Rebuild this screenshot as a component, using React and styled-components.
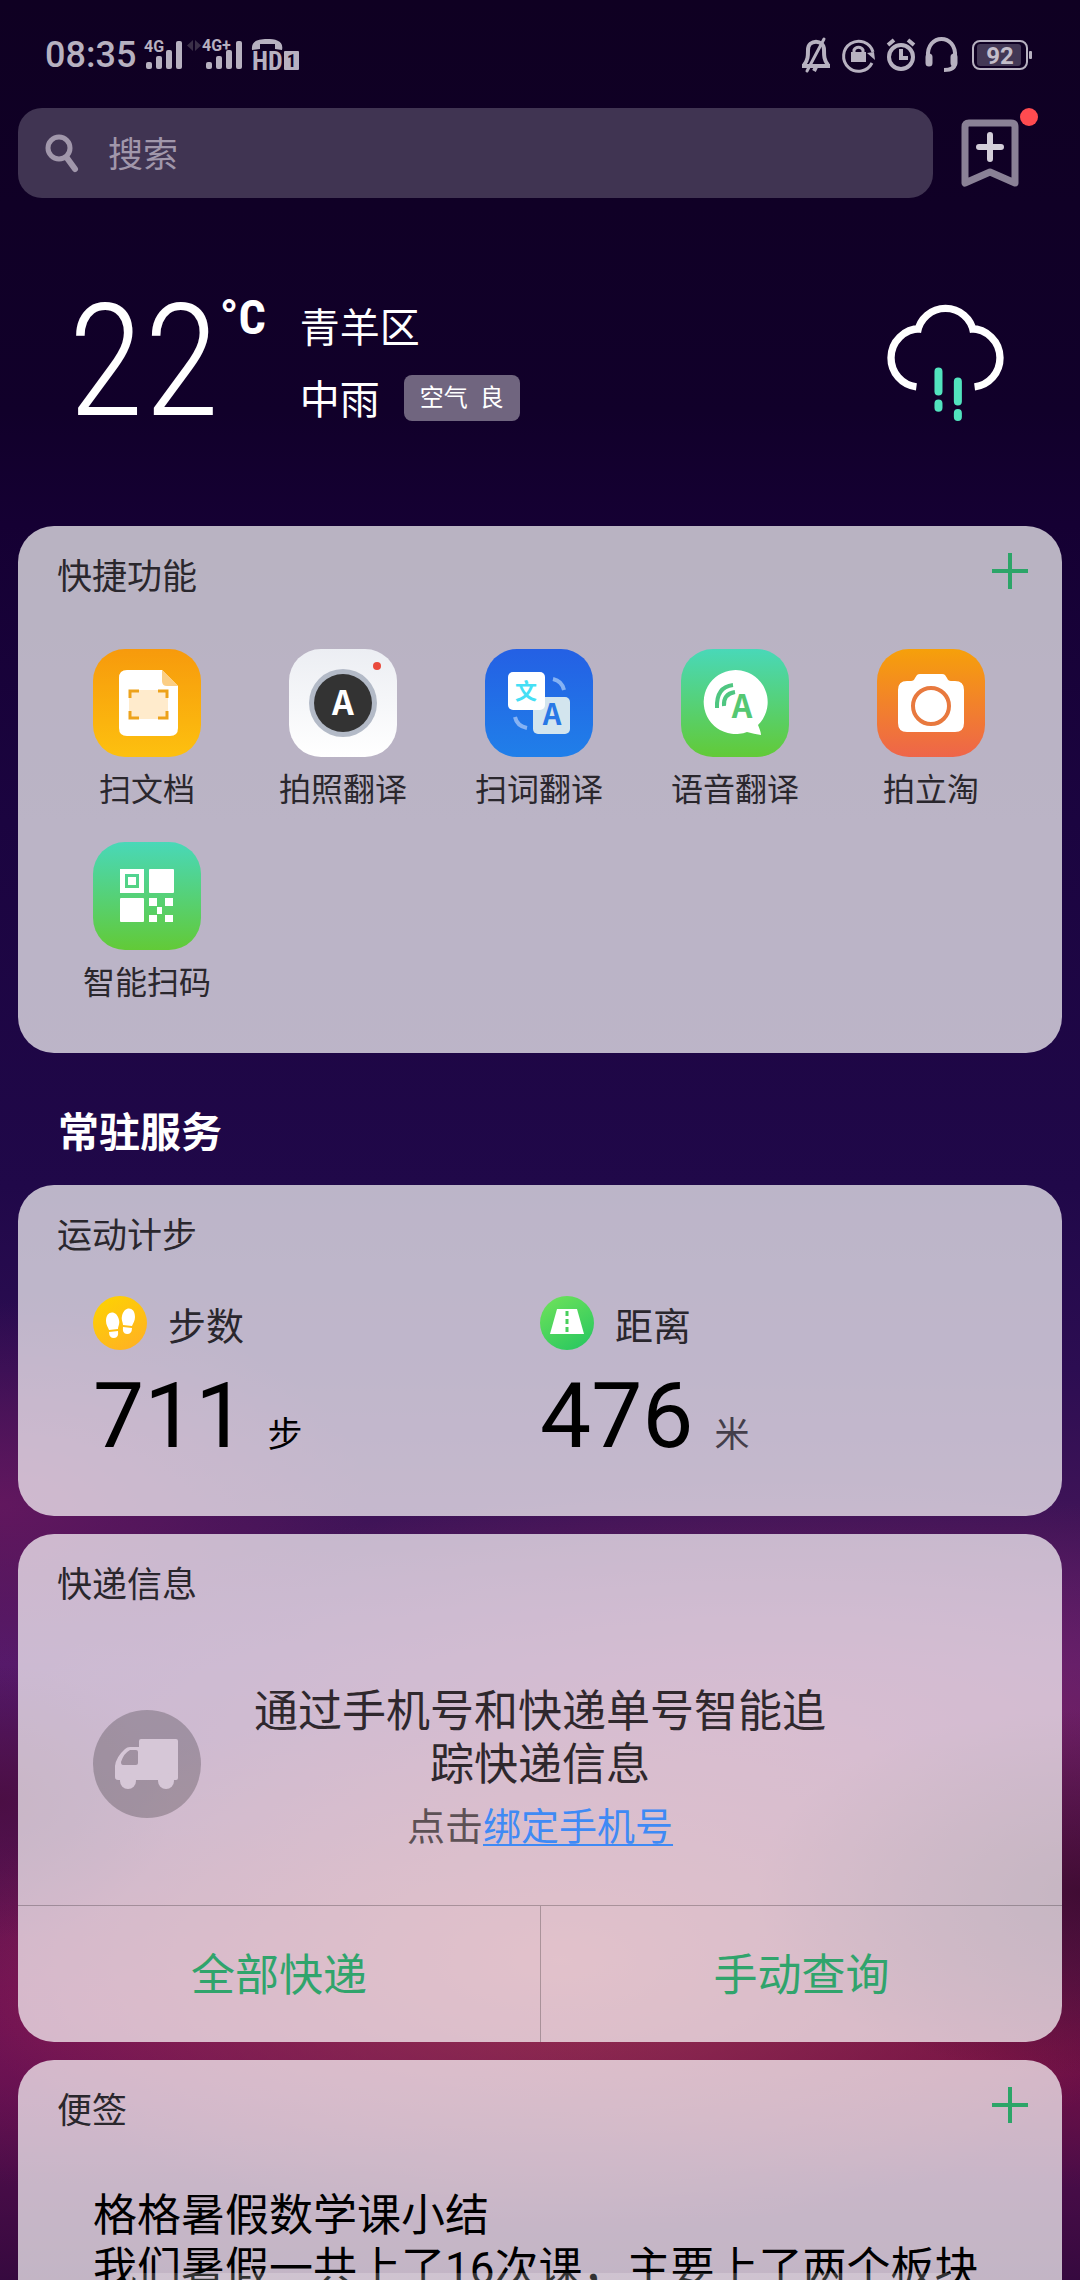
import React from "react";
import styled, { createGlobalStyle } from "styled-components";

const services = [
  { name: "扫文档", from: "#f79a0c", to: "#fdc00f", icon: <DocIcon /> },
  { name: "拍照翻译", from: "#eceef3", to: "#ffffff", icon: <PhotoIcon /> },
  { name: "扫词翻译", from: "#2460e4", to: "#207fe9", icon: <WordIcon /> },
  { name: "语音翻译", from: "#49d8b8", to: "#62ca37", icon: <VoiceIcon /> },
  { name: "拍立淘", from: "#f6a00a", to: "#ee654a", icon: <CameraIcon /> },
  { name: "智能扫码", from: "#49d8b8", to: "#62ca37", icon: <QrIcon /> },
];

export default function App() {
  return (
    <>
      <GlobalStyle />
      <Screen>
        <StatusBar>
          <StatusGroup>
            <Clock>08:35</Clock>
            <SignalIcons />
          </StatusGroup>
          <StatusGroup>
            <DeviceIcons />
          </StatusGroup>
        </StatusBar>

        <TopRow>
          <SearchBox>
            <SearchIcon />
            <SearchInput type="text" placeholder="搜索" aria-label="搜索" />
          </SearchBox>
          <BookmarkButton aria-label="收藏">
            <BookmarkIcon />
            <RedDot />
          </BookmarkButton>
        </TopRow>

        <Weather>
          <Temperature>22</Temperature>
          <Unit>°C</Unit>
          <WeatherInfo>
            <span>青羊区</span>
            <WeatherLine>
              <span>中雨</span>
              <AirBadge>空气&nbsp;&nbsp;良</AirBadge>
            </WeatherLine>
          </WeatherInfo>
          <RainIcon />
        </Weather>

        <Card>
          <CardHeader>
            <CardTitle>快捷功能</CardTitle>
            <AddButton aria-label="添加快捷功能">
              <PlusIcon />
            </AddButton>
          </CardHeader>
          <ServiceGrid>
            {services.map((s) => (
              <Service key={s.name}>
                <Tile $from={s.from} $to={s.to}>
                  {s.icon}
                </Tile>
                {s.name}
              </Service>
            ))}
          </ServiceGrid>
        </Card>

        <SectionTitle>常驻服务</SectionTitle>

        <Card>
          <CardHeader>
            <CardTitle>运动计步</CardTitle>
          </CardHeader>
          <Stats>
            <Stat>
              <StatLabel>
                <StepsIcon />
                步数
              </StatLabel>
              <StatValue>
                <Number>711</Number>
                <StatUnit $color="#000">步</StatUnit>
              </StatValue>
            </Stat>
            <Stat>
              <StatLabel>
                <RoadIcon />
                距离
              </StatLabel>
              <StatValue>
                <Number>476</Number>
                <StatUnit $color="#443e4a">米</StatUnit>
              </StatValue>
            </Stat>
          </Stats>
        </Card>

        <Card>
          <CardHeader>
            <CardTitle>快递信息</CardTitle>
          </CardHeader>
          <Delivery>
            <TruckIcon />
            <DeliveryText>
              <DeliveryLead>通过手机号和快递单号智能追踪快递信息</DeliveryLead>
              <DeliveryHint>
                点击<a href="#bind">绑定手机号</a>
              </DeliveryHint>
            </DeliveryText>
          </Delivery>
          <Actions>
            <ActionButton>全部快递</ActionButton>
            <ActionButton>手动查询</ActionButton>
          </Actions>
        </Card>

        <Card>
          <CardHeader>
            <CardTitle>便签</CardTitle>
            <AddButton aria-label="添加便签">
              <PlusIcon />
            </AddButton>
          </CardHeader>
          <Note>
            <p>格格暑假数学课小结</p>
            <p>我们暑假一共上了16次课，主要上了两个板块</p>
          </Note>
        </Card>
        <HomeBar />
      </Screen>
    </>
  );
}

function SignalBars({ x }) {
  return (
    <g>
      <rect x={x} y="24" width="6" height="7" rx="2" />
      <rect x={x + 10} y="18" width="6" height="13" rx="2" />
      <rect x={x + 20} y="12" width="6" height="19" rx="2" />
      <rect x={x + 30} y="3" width="6" height="28" rx="2" />
    </g>
  );
}

function SignalIcons() {
  return (
    <svg width="158" height="34" viewBox="0 0 158 34" fill="#b7b1c0">
      <SignalBars x={3} />
      <SignalBars x={63} />
      <SmallText x="1" y="14" fontSize="16">4G</SmallText>
      <SmallText x="59" y="13" fontSize="16">4G+</SmallText>
      <path d="M50 2v11l-6-5.500zM52 2v11l6-5.500z" fill="#3b3048" />
      <path d="M109 12C108 3 115 1 124 1s17 2 15 11l-7-1V6h-15v5z" />
      <NarrowText x="109" y="32" fontSize="26">HD</NarrowText>
      <rect x="141" y="13" width="15" height="19" rx="1" />
      <NarrowText x="144" y="29" fontSize="18" fill="#0f0022">1</NarrowText>
    </svg>
  );
}

function DeviceIcons() {
  return (
    <svg width="232" height="36" viewBox="0 0 232 36" fill="none" stroke="#b7b1c0" strokeWidth="4">
      <path d="M2 29h28M4 28c4-5 4-9 4-15 0-11 16-11 16 0 0 6 0 10 4 15M14 34l2-4" />
      <path d="M7 34L24 2" strokeWidth="3" strokeLinecap="round" />
      <path d="M72 26a15 15 0 1 1 1-11" strokeWidth="3" />
      <path d="M67 16l7-1 1 8z" fill="#b7b1c0" stroke="none" />
      <path d="M54 16v-3a5 5 0 0 1 9 0v3" strokeWidth="3" />
      <path d="M51 15h15v10H51z" fill="#b7b1c0" stroke="none" />
      <circle cx="101" cy="20" r="12" />
      <path d="M101 12v9h7M88 8l6-5M114 8l-6-5" strokeWidth="4" />
      <path d="M128 20c-2-24 29-24 27 0v6q0 7-11 7" />
      <path d="M129 20v6M154 20v6" strokeWidth="7" strokeLinecap="round" />
      <rect x="173" y="4" width="54" height="28" rx="7" strokeWidth="2" />
      <rect x="177" y="7" width="44" height="22" rx="3" fill="#433855" stroke="none" />
      <rect x="229" y="14" width="3" height="8" rx="1" fill="#b7b1c0" stroke="none" />
      <SmallText x="200" y="27" fontSize="24" textAnchor="middle" fill="#c3bdca" stroke="none">
        92
      </SmallText>
    </svg>
  );
}

function SearchIcon() {
  return (
    <svg width="32" height="38" viewBox="0 0 32 38" fill="none" stroke="#a197ab">
      <circle cx="13" cy="14" r="11" strokeWidth="5" />
      <path d="M21 24l8 11" strokeWidth="6" strokeLinecap="round" />
    </svg>
  );
}

function BookmarkIcon() {
  return (
    <svg width="58" height="68" viewBox="0 0 58 68" fill="none" strokeLinejoin="round">
      <path d="M4 8q0-4 4-4h42q4 0 4 4v56L29 53 4 64z" stroke="#8a8196" strokeWidth="7" />
      <path d="M29 16v24M18 28h22" stroke="#d3ced9" strokeWidth="6" strokeLinecap="round" />
    </svg>
  );
}

function RainIcon() {
  return (
    <svg width="117" height="119" viewBox="140 98 350 356" fill="none" strokeWidth="22">
      <path
        d="M228 349A87 87 0 0 1 152 262A87 87 0 0 1 241 175M231 186A85 85 0 0 1 399 186M389 175A87 87 0 0 1 478 262A87 87 0 0 1 402 349"
        stroke="#fff"
      />
      <path
        d="M294 303v60M294 399v12M352 333v60M352 427v12"
        stroke="#52e3be"
        strokeWidth="24"
        strokeLinecap="round"
      />
    </svg>
  );
}

function PlusIcon() {
  return (
    <svg width="36" height="36" viewBox="0 0 36 36" stroke="#2ca568" strokeWidth="4">
      <path d="M18 0v36M0 18h36" />
    </svg>
  );
}

function DocIcon() {
  return (
    <svg width="108" height="108" viewBox="0 0 108 108">
      <path d="M34 21h35l16 16v42q0 8-8 8H34q-8 0-8-8V29q0-8 8-8z" fill="#fff" />
      <path d="M69 21l16 16H74q-5 0-5-5z" fill="#fbce85" />
      <rect x="36" y="41" width="39" height="29" fill="#ffebcc" />
      <path
        d="M37 49v-7h9M65 42h9v7M74 62v7h-9M46 69h-9v-7"
        fill="none"
        stroke="#eda21a"
        strokeWidth="3"
      />
    </svg>
  );
}

function PhotoIcon() {
  return (
    <svg width="108" height="108" viewBox="0 0 108 108">
      <circle cx="54" cy="54" r="34" fill="#b3bac7" />
      <circle cx="54" cy="54" r="29" fill="#333" />
      <circle cx="88" cy="17" r="4" fill="#ea4a3c" />
      <Letter x="54" y="66" fontSize="34" fill="#fff">A</Letter>
    </svg>
  );
}

function WordIcon() {
  return (
    <svg width="108" height="108" viewBox="0 0 108 108">
      <rect x="48" y="48" width="37" height="37" rx="5" fill="#d3e5ee" />
      <Letter x="67" y="76" fontSize="29" fill="#2878e6">A</Letter>
      <rect x="23" y="23" width="37" height="38" rx="5" fill="#fff" />
      <Letter x="41" y="50" fontSize="22" fill="#45dff5">文</Letter>
      <path d="M30 68q2 9 12 11M68 30q9 2 11 11" fill="none" stroke="#86b2f3" strokeWidth="4" />
    </svg>
  );
}

function VoiceIcon() {
  return (
    <svg width="108" height="108" viewBox="0 0 108 108">
      <path d="M77 76A32 32 0 1 0 66 83Q73 85 80 86Q80 83 77 76z" fill="#fff" />
      <path
        d="M36 59Q35 38 52 36M43 57Q42 45 54 43"
        fill="none"
        stroke="#4fc681"
        strokeWidth="4"
      />
      <Letter x="61" y="69" fontSize="32" fill="#55c872">A</Letter>
    </svg>
  );
}

function CameraIcon() {
  return (
    <svg width="108" height="108" viewBox="0 0 108 108">
      <path
        d="M30 32h4q3 0 4-3l2-3q1-1 3-1h22q2 0 3 1l2 3q1 3 4 3h4q9 0 9 9v33q0 9-9 9H30q-9 0-9-9V41q0-9 9-9z"
        fill="#fff"
      />
      <circle cx="54" cy="57" r="18" fill="none" stroke="#e8793e" strokeWidth="4" />
    </svg>
  );
}

function QrIcon() {
  return (
    <svg width="108" height="108" viewBox="0 0 108 108" fill="#fff">
      <path d="M27 27h24v24H27zM32 32v14h14V32z" fillRule="evenodd" />
      <rect x="35" y="35" width="8" height="8" />
      <rect x="56" y="27" width="25" height="24" rx="1" />
      <rect x="27" y="56" width="24" height="24" rx="1" />
      <path d="M56 56h8v8h-8zM72 56h8v8h-8zM64 65h5v7h-5zM56 73h8v7h-8zM72 73h8v7h-8z" />
    </svg>
  );
}

function StepsIcon() {
  return (
    <svg width="54" height="54" viewBox="0 0 54 54">
      <linearGradient id="steps" x2="0.6" y2="1">
        <stop stopColor="#fdd400" />
        <stop offset="1" stopColor="#ffb420" />
      </linearGradient>
      <circle cx="27" cy="27" r="27" fill="url(#steps)" />
      <g fill="#fff">
        <path d="M13 25c0-11 11-11 13-1 1 4-1 6-1 9l-9 1c-1-3-3-5-3-9z" />
        <path d="M16 36l9-1q1 7-4 7t-5-6z" />
        <path d="M42 21c0-11-11-11-13-1-1 4 1 6 1 9l9 1c1-3 3-5 3-9z" />
        <path d="M39 32l-9-1q-1 7 4 7t5-6z" />
      </g>
    </svg>
  );
}

function RoadIcon() {
  return (
    <svg width="54" height="54" viewBox="0 0 54 54">
      <linearGradient id="road" x2="0.6" y2="1">
        <stop stopColor="#72e35a" />
        <stop offset="1" stopColor="#2fca5f" />
      </linearGradient>
      <circle cx="27" cy="27" r="27" fill="url(#road)" />
      <path d="M17 13h20l7 25H10z" fill="#fff" />
      <path d="M27 15v5M27 23v5M27 31v5" stroke="#48cf5c" strokeWidth="3" />
    </svg>
  );
}

function TruckIcon() {
  return (
    <svg width="108" height="108" viewBox="0 0 108 108">
      <circle cx="54" cy="54" r="54" fill="#000" fillOpacity="0.22" />
      <g fill="#d6c7d7">
        <path
          d="M48 29h35q2 0 2 2v37q0 2-2 2H25q-3 0-3-3V56q1-9 10-17 2-2 5-2h9v-6q0-2 2-2zM45 42q0-2-2-2h-6q-6 3-9 12 0 3 2 3h13q2 0 2-2z"
          fillRule="evenodd"
        />
        <circle cx="35" cy="71" r="8" />
        <circle cx="73" cy="71" r="8" />
      </g>
    </svg>
  );
}

const GlobalStyle = createGlobalStyle`
  * {
    box-sizing: border-box;
  }
  body {
    margin: 0;
    background: #0f0022;
    font-family: Roboto, "Noto Sans CJK SC", sans-serif;
  }
  svg {
    display: block;
    flex: none;
    overflow: visible;
  }
  button {
    border: 0;
    padding: 0;
    background: none;
    font: inherit;
    color: inherit;
    cursor: pointer;
  }
  h2, p {
    margin: 0;
    font-weight: 400;
  }
`;
const Screen = styled.main`
  height: 100vh;
  overflow-y: auto;
  scrollbar-width: none;
  padding: 0 18px;
  display: flex;
  flex-direction: column;
  background:
    radial-gradient(30% 8% at 100% 83%, rgba(60, 10, 48, 0.9), transparent),
    radial-gradient(16% 6% at 0% 79%, rgba(72, 12, 62, 0.8), transparent),
    radial-gradient(56% 12% at 52% 86%, rgba(168, 55, 80, 0.85), transparent),
    radial-gradient(50% 8% at 10% 88%, rgba(130, 20, 85, 0.75), transparent),
    radial-gradient(50% 6% at 92% 90%, rgba(122, 14, 62, 0.7), transparent),
    radial-gradient(34% 9% at 0% 66%, rgba(106, 24, 96, 0.8), transparent),
    radial-gradient(70% 11% at 72% 76%, rgba(140, 40, 100, 0.7), transparent),
    linear-gradient(
      #0f0022 0%,
      #11002a 18%,
      #150033 23%,
      #1b0440 36%,
      #200849 52%,
      #2c0d52 60%,
      #401458 67%,
      #521a6c 73%,
      #5a1350 85%,
      #5a1050 91%,
      #36093f 100%
    );
`;
const StatusBar = styled.header`
  display: flex;
  flex: none;
  align-items: center;
  justify-content: space-between;
  height: 108px;
  padding: 2px 30px 0 27px;
`;
const StatusGroup = styled.div`
  display: flex;
  align-items: center;
  gap: 7px;
`;
const Clock = styled.time`
  font-size: 36px;
  font-weight: 500;
  color: #b7b1c0;
`;
const SmallText = styled.text`
  font-family: Roboto, sans-serif;
  font-weight: 700;
`;
const NarrowText = styled.text`
  font-family: "Roboto Condensed", Roboto, sans-serif;
  font-weight: 700;
`;
const Letter = styled.text`
  font-family: "Noto Sans CJK SC", sans-serif;
  font-weight: 700;
  text-anchor: middle;
`;
const TopRow = styled.div`
  display: flex;
  flex: none;
  align-items: center;
  gap: 28px;
  padding-right: 43px;
`;
const SearchBox = styled.label`
  display: flex;
  flex: 1;
  align-items: center;
  gap: 30px;
  height: 90px;
  padding: 0 28px;
  border-radius: 24px;
  background: #403452;
`;
const SearchInput = styled.input`
  flex: 1;
  min-width: 0;
  border: 0;
  outline: 0;
  padding: 4px 0 0;
  background: none;
  color: #fff;
  font: inherit;
  font-size: 35px;
  &::placeholder {
    color: #a197ab;
    opacity: 1;
  }
`;
const BookmarkButton = styled.button`
  position: relative;
`;
const RedDot = styled.span`
  position: absolute;
  top: -11px;
  right: -19px;
  width: 18px;
  height: 18px;
  border-radius: 50%;
  background: #ff4b50;
`;
const Weather = styled.section`
  display: flex;
  flex: none;
  align-items: center;
  height: 328px;
  padding: 0 58px 0 50px;
  color: #fff;
  > svg {
    margin-left: auto;
  }
`;
const Temperature = styled.div`
  font-family: "Roboto Condensed", Roboto, sans-serif;
  font-size: 156px;
  font-weight: 300;
  line-height: 160px;
`;
const Unit = styled.div`
  align-self: flex-start;
  margin-top: 92px;
  font-family: "Roboto Condensed", Roboto, sans-serif;
  font-size: 48px;
  font-weight: 700;
  line-height: 56px;
`;
const WeatherInfo = styled.div`
  display: flex;
  flex-direction: column;
  gap: 12px;
  margin-left: 34px;
  padding-top: 6px;
  font-size: 40px;
  line-height: 60px;
`;
const WeatherLine = styled.div`
  display: flex;
  align-items: center;
  gap: 24px;
`;
const AirBadge = styled.span`
  margin-bottom: 6px;
  padding: 0 16px;
  border-radius: 8px;
  background: #70657f;
  font-size: 24px;
  line-height: 46px;
`;
const Card = styled.section`
  flex: none;
  margin-bottom: 18px;
  border-radius: 36px;
  background: rgba(255, 255, 255, 0.7);
  overflow: hidden;
`;
const CardHeader = styled.div`
  display: flex;
  align-items: center;
  justify-content: space-between;
  height: 98px;
  padding: 0 34px 4px 39px;
`;
const CardTitle = styled.h2`
  font-size: 35px;
  color: #2a272d;
`;
const AddButton = styled.button`
  margin-bottom: 4px;
`;
const ServiceGrid = styled.div`
  display: grid;
  grid-template-columns: repeat(5, 1fr);
  row-gap: 28px;
  padding: 25px 33px 46px 31px;
`;
const Service = styled.button`
  display: flex;
  flex-direction: column;
  align-items: center;
  gap: 9px;
  font-size: 32px;
  line-height: 48px;
  color: #2a272d;
`;
const Tile = styled.span`
  border-radius: 32px;
  overflow: hidden;
  background: linear-gradient(${(props) => props.$from}, ${(props) => props.$to});
`;
const SectionTitle = styled.h2`
  flex: none;
  margin: 32px 40px 22px;
  color: #fff;
  font-size: 41px;
  font-weight: 700;
  line-height: 60px;
`;
const Stats = styled.div`
  display: grid;
  grid-template-columns: 1fr 1fr;
  padding: 13px 75px 49px;
`;
const Stat = styled.div`
  display: flex;
  flex-direction: column;
`;
const StatLabel = styled.div`
  display: flex;
  align-items: center;
  gap: 21px;
  height: 54px;
  color: #2a272d;
  font-size: 38px;
`;
const StatValue = styled.div`
  display: flex;
  align-items: baseline;
  gap: 21px;
  height: 117px;
  line-height: 132px;
`;
const Number = styled.span`
  font-size: 91px;
`;
const StatUnit = styled.span`
  font-size: 35px;
  color: ${(props) => props.$color};
`;
const Delivery = styled.div`
  display: grid;
  grid-template-columns: 108px 1fr 108px;
  align-items: start;
  gap: 50px;
  padding: 54px 75px 50px;
  > svg {
    margin-top: 24px;
  }
`;
const DeliveryText = styled.div`
  text-align: center;
`;
const DeliveryLead = styled.p`
  font-size: 44px;
  line-height: 53px;
  color: #2f282d;
`;
const DeliveryHint = styled.p`
  margin-top: 7px;
  font-size: 38px;
  line-height: 56px;
  color: #5d5155;
  a {
    color: #3f8af5;
    text-decoration-thickness: 2px;
    text-decoration-skip-ink: none;
    text-underline-offset: 4px;
  }
`;
const Actions = styled.div`
  display: grid;
  grid-template-columns: 1fr 1fr;
  border-top: 1px solid rgba(0, 0, 0, 0.24);
`;
const ActionButton = styled.button`
  height: 136px;
  padding-bottom: 4px;
  font-size: 44px;
  color: #30a46c;
  & + & {
    border-left: 1px solid rgba(0, 0, 0, 0.24);
  }
`;
const Note = styled.div`
  padding: 32px 75px 60px;
  font-size: 44px;
  line-height: 53px;
  color: #000;
`;
const HomeBar = styled.div`
  position: fixed;
  bottom: 0;
  left: 12%;
  right: 12%;
  height: 7px;
  background: rgba(255, 255, 255, 0.2);
`;
